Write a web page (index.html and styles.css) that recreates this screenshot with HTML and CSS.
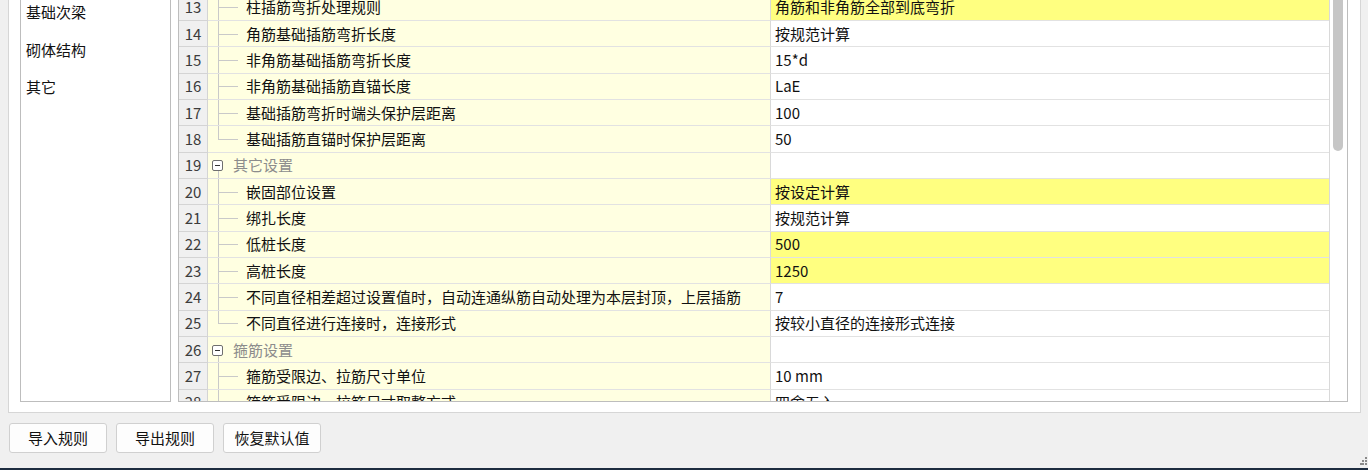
FILE: index.html
```html
<!DOCTYPE html>
<html lang="zh-CN">
<head>
<meta charset="utf-8">
<title>钢筋设置</title>
<link rel="stylesheet" href="styles.css">
</head>
<body>
<div class="dialog">
  <div class="panel">
    <div class="list">
      <ul class="items">
        <li>基础次梁</li>
        <li>砌体结构</li>
        <li>其它</li>
      </ul>
    </div>
    <div class="table">
      <div class="rows">
        <div class="row"><div class="num">13</div><div class="name"><span class="tree child"></span><span class="label">柱插筋弯折处理规则</span></div><div class="val hl">角筋和非角筋全部到底弯折</div></div>
        <div class="row"><div class="num">14</div><div class="name"><span class="tree child"></span><span class="label">角筋基础插筋弯折长度</span></div><div class="val">按规范计算</div></div>
        <div class="row"><div class="num">15</div><div class="name"><span class="tree child"></span><span class="label">非角筋基础插筋弯折长度</span></div><div class="val">15*d</div></div>
        <div class="row"><div class="num">16</div><div class="name"><span class="tree child"></span><span class="label">非角筋基础插筋直锚长度</span></div><div class="val">LaE</div></div>
        <div class="row"><div class="num">17</div><div class="name"><span class="tree child"></span><span class="label">基础插筋弯折时端头保护层距离</span></div><div class="val">100</div></div>
        <div class="row"><div class="num">18</div><div class="name"><span class="tree last"></span><span class="label">基础插筋直锚时保护层距离</span></div><div class="val">50</div></div>
        <div class="row"><div class="num">19</div><div class="name"><span class="tree group"><span class="toggle"></span></span><span class="label group-label">其它设置</span></div><div class="val"></div></div>
        <div class="row"><div class="num">20</div><div class="name"><span class="tree child"></span><span class="label">嵌固部位设置</span></div><div class="val hl">按设定计算</div></div>
        <div class="row"><div class="num">21</div><div class="name"><span class="tree child"></span><span class="label">绑扎长度</span></div><div class="val">按规范计算</div></div>
        <div class="row"><div class="num">22</div><div class="name"><span class="tree child"></span><span class="label">低桩长度</span></div><div class="val hl">500</div></div>
        <div class="row"><div class="num">23</div><div class="name"><span class="tree child"></span><span class="label">高桩长度</span></div><div class="val hl">1250</div></div>
        <div class="row"><div class="num">24</div><div class="name"><span class="tree child"></span><span class="label">不同直径相差超过设置值时，自动连通纵筋自动处理为本层封顶，上层插筋</span></div><div class="val">7</div></div>
        <div class="row"><div class="num">25</div><div class="name"><span class="tree last"></span><span class="label">不同直径进行连接时，连接形式</span></div><div class="val">按较小直径的连接形式连接</div></div>
        <div class="row"><div class="num">26</div><div class="name"><span class="tree group"><span class="toggle"></span></span><span class="label group-label">箍筋设置</span></div><div class="val"></div></div>
        <div class="row"><div class="num">27</div><div class="name"><span class="tree child"></span><span class="label">箍筋受限边、拉筋尺寸单位</span></div><div class="val">10 mm</div></div>
        <div class="row"><div class="num">28</div><div class="name"><span class="tree child"></span><span class="label">箍筋受限边、拉筋尺寸取整方式</span></div><div class="val">四舍五入</div></div>
      </div>
      <div class="scrollbar"><div class="thumb"></div></div>
    </div>
  </div>
  <div class="buttons">
    <button class="btn">导入规则</button>
    <button class="btn">导出规则</button>
    <button class="btn">恢复默认值</button>
  </div>
  <div class="grip-row">
    <svg class="grip" width="7" height="8" viewBox="0 0 7 8"><rect x="5" y="0" width="2" height="2" fill="#8a8a8a"/><rect x="2" y="3" width="2" height="2" fill="#8a8a8a"/><rect x="5" y="3" width="2" height="2" fill="#8a8a8a"/><rect x="0" y="6" width="2" height="2" fill="#8a8a8a"/><rect x="2" y="6" width="2" height="2" fill="#8a8a8a"/><rect x="5" y="6" width="2" height="2" fill="#8a8a8a"/></svg>
  </div>
</div>
<div class="taskbar"></div>
</body>
</html>
```
FILE: styles.css
```css
* { box-sizing: border-box; }

html, body {
  margin: 0;
  padding: 0;
}

body {
  width: 1368px;
  height: 470px;
  overflow: hidden;
  background: #f0f0f0;
  font-family: "Noto Sans CJK SC", "Noto Sans", sans-serif;
  font-size: 15px;
  color: #111111;
}

.dialog {
  height: 468px;
  display: flex;
  flex-direction: column;
}

.panel {
  margin-left: 8px;
  width: 1353px;
  height: 413px;
  background: #ffffff;
  border: 1px solid #d6d6d6;
  border-top: none;
  padding: 0 12px 10px 11px;
  display: flex;
  gap: 7px;
  flex: none;
}

.list {
  width: 151px;
  flex: none;
  border: 1px solid #bdbdbd;
  border-top: none;
  overflow: hidden;
  background: #fff;
}

.items {
  list-style: none;
  margin: -7px 0 0 0;
  padding: 0 0 0 5px;
}

.items li {
  height: 37.5px;
  line-height: 37.5px;
  white-space: nowrap;
}

.table {
  flex: 1;
  display: flex;
  border: 1px solid #bdbdbd;
  border-top: none;
  overflow: hidden;
  background: #fff;
}

.rows {
  width: 1151px;
  flex: none;
  overflow: hidden;
  border-right: 1px solid #d9d9d9;
}

.rows > .row:first-child { margin-top: -5.33px; }

.row {
  display: grid;
  grid-template-columns: 29px 563px 558px;
  height: 26.33px;
}

.num {
  background: #f0f0f0;
  border-right: 1px solid #d4d4d4;
  border-bottom: 1px solid #d4d4d4;
  color: #3c3c3c;
  display: flex;
  align-items: center;
  justify-content: center;
  line-height: 20px;
}

.name {
  background: #ffffe1;
  border-right: 1px solid #d9d9d9;
  border-bottom: 1px solid #e2e2e2;
  display: flex;
  align-items: center;
  white-space: nowrap;
  overflow: hidden;
}

.tree {
  align-self: stretch;
  flex: none;
  width: 30px;
  margin-bottom: -1px;
}

.tree.child {
  background:
    linear-gradient(#c9c9c9, #c9c9c9) 10px 0 / 1px 100% no-repeat,
    linear-gradient(#c9c9c9, #c9c9c9) 10px 50% / 20px 1px no-repeat;
}

.tree.last {
  background:
    linear-gradient(#c9c9c9, #c9c9c9) 10px 0 / 1px 50% no-repeat,
    linear-gradient(#c9c9c9, #c9c9c9) 10px 50% / 20px 1px no-repeat;
}

.tree.group {
  width: 15px;
  padding-left: 4px;
  display: flex;
  align-items: center;
  background: linear-gradient(#c9c9c9, #c9c9c9) 10px 100% / 1px 50% no-repeat;
}

.toggle {
  width: 11px;
  height: 11px;
  border: 1px solid #6f6f6f;
  border-radius: 2px;
  background: #fff;
  display: flex;
  align-items: center;
  justify-content: center;
}

.toggle::after {
  content: "";
  width: 5px;
  height: 1px;
  background: #333;
}

.label {
  margin-left: 8px;
  line-height: 20px;
}

.label.group-label {
  margin-left: 10px;
  color: #8c8c8c;
}

.val {
  background: #fff;
  border-bottom: 1px solid #e2e2e2;
  padding-left: 4px;
  display: flex;
  align-items: center;
  line-height: 20px;
  white-space: nowrap;
  overflow: hidden;
}

.val.hl { background: #ffff80; }

.scrollbar {
  flex: 1;
  background: #fff;
  padding-left: 3px;
}

.thumb {
  width: 10px;
  height: 151px;
  background: #c6c6c6;
  border-radius: 0 0 5px 5px;
}

.buttons {
  display: flex;
  gap: 9px;
  margin: 10px 0 0 9px;
  flex: none;
}

.btn {
  width: 98px;
  height: 30px;
  background: #fdfdfd;
  border: 1px solid #d0d0d0;
  border-radius: 3px;
  font-family: "Noto Sans CJK SC", "Noto Sans", sans-serif;
  font-size: 15px;
  color: #111111;
  padding: 0;
  line-height: 20px;
}

.grip-row {
  flex: 1;
  display: flex;
  justify-content: flex-end;
  align-items: flex-end;
  padding: 0 1px 3px 0;
}

.grip { display: block; }

.taskbar {
  height: 2px;
  background: #1d2c40;
}
```
